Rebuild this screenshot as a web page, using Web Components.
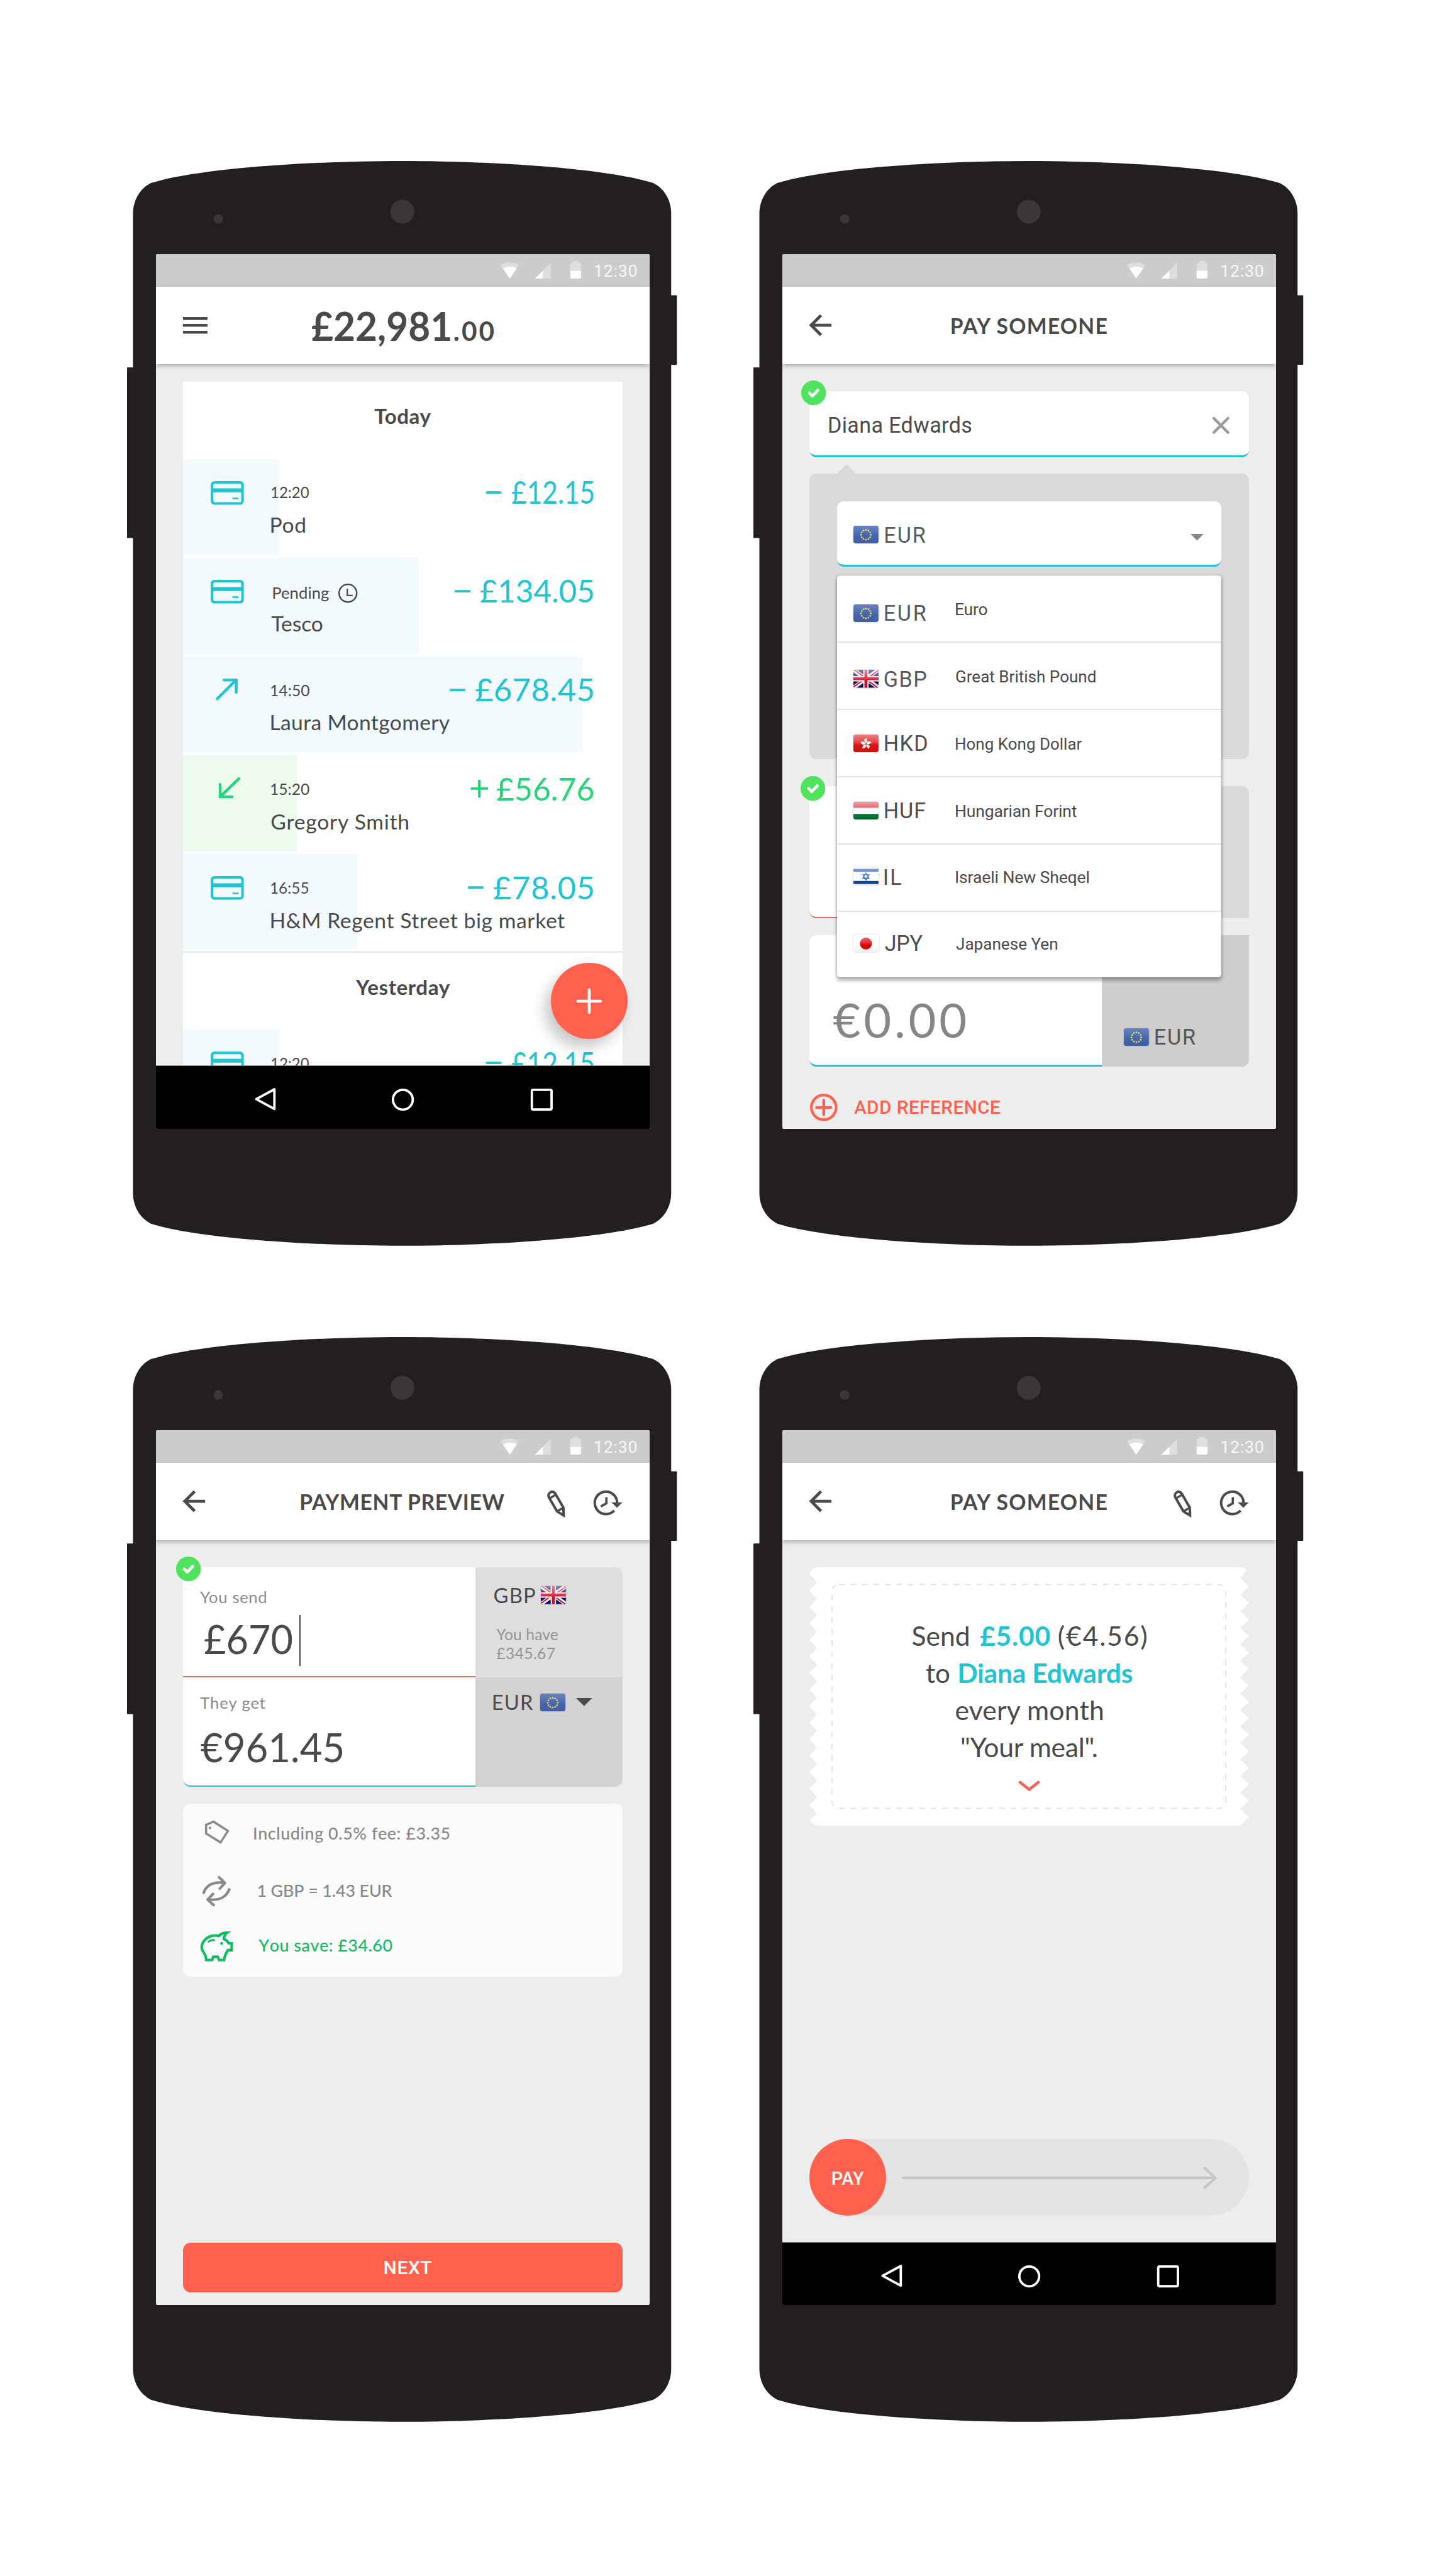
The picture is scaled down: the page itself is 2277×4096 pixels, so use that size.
<!DOCTYPE html>
<html lang="en">
<head>
<meta charset="utf-8">
<title>Money transfer app screens</title>
<style>
html,body{margin:0;padding:0;background:#fff}
body{width:2277px;height:4096px;overflow:hidden}
</style>
</head>
<body>
<device-board>
  <phone-frame>
    <app-bar>
      <ui-icon slot="lead" name="menu"></ui-icon>
      <ui-text up="90" size="67.5" wt="700" w="231.5">£22,981</ui-text>
      <ui-text up="90" size="44.5" wt="700" w="67" ml="7">.00</ui-text>
    </app-bar>
    <tx-feed></tx-feed>
    <nav-bar></nav-bar>
  </phone-frame>
  <phone-frame>
    <app-bar>
      <ui-icon slot="lead" name="back"></ui-icon>
      <ui-text up="79.5" size="35.5" wt="700" w="261.5">PAY SOMEONE</ui-text>
    </app-bar>
    <pay-form></pay-form>
  </phone-frame>
  <phone-frame>
    <app-bar>
      <ui-icon slot="lead" name="back"></ui-icon>
      <ui-text up="79.5" size="35.5" wt="700" w="342">PAYMENT PREVIEW</ui-text>
      <ui-icon slot="actions" name="pencil"></ui-icon>
      <ui-icon slot="actions" name="history"></ui-icon>
    </app-bar>
    <payment-preview></payment-preview>
  </phone-frame>
  <phone-frame>
    <app-bar>
      <ui-icon slot="lead" name="back"></ui-icon>
      <ui-text up="79.5" size="35.5" wt="700" w="261.5">PAY SOMEONE</ui-text>
      <ui-icon slot="actions" name="pencil"></ui-icon>
      <ui-icon slot="actions" name="history"></ui-icon>
    </app-bar>
    <pay-confirm></pay-confirm>
    <nav-bar></nav-bar>
  </phone-frame>
</device-board>

<script>
const TEAL = '#22c4d2', CORAL = '#ff614e', INK = '#4a4a4a';

class Base extends HTMLElement {
  connectedCallback() {
    if (this.shadowRoot) return;
    this.attachShadow({ mode: 'open' });
    this.shadowRoot.innerHTML = this.render();
  }
}
const define = (n, c) => customElements.define(n, c);

/* A single line of type: its baseline is the bottom of the box, its ink spans the width w.
   Short lines are tracked out to w; lines that would need tight tracking are condensed instead. */
const pen = document.createElement('canvas').getContext('2d');
define('ui-text', class extends Base {
  render() {
    const a = n => this.getAttribute(n);
    const roboto = a('f') === 'r';
    const size = +a('size'), wt = a('wt') || 400, w = +a('w');
    const fam = roboto ? 'Roboto, sans-serif' : 'Lato, sans-serif';
    const text = this.textContent;
    const kern = /\d/.test(text) ? 'none' : 'normal';
    pen.font = `${wt} ${size}px ${fam}`;
    pen.fontKerning = kern;
    const m = pen.measureText(text);
    const ink = m.actualBoundingBoxLeft + m.actualBoundingBoxRight;
    let ls = text.length > 1 ? (w - ink) / (text.length - 1) : 0, sx = 1;
    if (ls < -.008 * size) { sx = w / ink; ls = 0; }
    return `<style>
      :host{display:flex;align-items:flex-end;flex:none;height:${a('up')}px;width:${w}px;
        margin-left:${a('ml') || 0}px;color:${a('c') || INK};white-space:nowrap}
      span{display:block;flex:none;font:${wt} ${size}px/1 ${fam};font-kerning:${kern};letter-spacing:${ls.toFixed(3)}px;
        ${sx < 1 ? `transform:scaleX(${sx.toFixed(4)});transform-origin:0 0;` : ''}
        margin-bottom:${roboto ? -.158 : -.125}em;margin-left:${(m.actualBoundingBoxLeft * sx).toFixed(2)}px}
    </style><span><slot></slot></span>`;
  }
});
const T = (text, up, size, w, o = {}) =>
  `<ui-text up="${up}" size="${size}" w="${w}" ${Object.entries(o).map(([k, v]) => `${k}="${v}"`).join(' ')}>${text}</ui-text>`;

const ICONS = {
  menu: [41, 28, '<path d="M0 2.5H41M0 14H41M0 25.5H41" stroke-width="4.8"/>'],
  back: [37, 36, '<path d="M37 18H3M19.5 1.5L3 18L19.5 34.5" stroke-width="5"/>'],
  pencil: [30, 44, '<g transform="translate(8.4 8.4) rotate(60)" stroke-width="4.2"><path d="M0 -6.2A6.2 6.2 0 0 0 0 6.2H27L38.5 0L27 -6.2Z"/><path d="M2 -6V6M27 -6V6" stroke-width="3.4"/></g><path d="M25 36L29.5 43.5L29.5 34Z" fill="currentColor" stroke="none"/>', 8],
  history: [48, 42, '<path d="M34.3 34.7A18.8 18.8 0 1 1 39.4 22" stroke-width="4.2"/><path d="M30 21.2H48L39 30Z" fill="currentColor" stroke="none"/><path d="M21.3 12.3V22.5L12 27.8" stroke-width="3.8"/>', 4],
  card: [56, 40, '<rect x="2.2" y="2.2" width="51.2" height="35.2" rx="4.5" stroke-width="4.4"/><path d="M2 15.4H53.6" stroke-width="6.8"/><path d="M36.5 29H46.5" stroke-width="2.8"/>'],
  out: [38, 37, '<path d="M2.5 34L34 2.5M14 2.4H34.4V23" stroke-width="4.8" stroke-linecap="round" stroke-linejoin="round"/>'],
  in: [38, 37, '<path d="M33.5 2.2L2.2 32.5M2.2 12V32.6H22" stroke-width="4.8" stroke-linecap="round" stroke-linejoin="round"/>'],
  clock: [32, 32, '<circle cx="16" cy="16" r="14.8" stroke-width="2.6"/><path d="M15 8.5V20H24" stroke-width="2.4"/>'],
  close: [28, 28, '<path d="M2 2L26 26M26 2L2 26" stroke-width="4.5" stroke-linecap="round"/>'],
  caret: [28, 14, '<path d="M0 0H28L14 14Z" fill="currentColor" stroke="none"/>'],
  plus: [42, 42, '<path d="M21 2V40M2 21H40" stroke-width="4.8" stroke-linecap="round"/>'],
  add: [46, 46, '<circle cx="23" cy="23" r="20.7" stroke-width="4.4"/><path d="M23 11V35M11 23H35" stroke-width="4.6" stroke-linecap="round"/>'],
  tag: [43, 41, '<path d="M15.3 2.6L2.8 8V22.5L27 37.5L39.5 18.3Z" stroke-width="3.6"/><circle cx="9.5" cy="13.3" r="2.2" fill="currentColor" stroke="none"/>'],
  swap: [47, 51, '<g stroke-width="4.4" stroke-linecap="round" stroke-linejoin="round"><path d="M2 28C7 15 17 9 37 11.5M27.8 2L37.6 11.7L29 21"/><path d="M44.8 22.5C40 35 30 41.5 9 39.5M18.7 48.8L8.6 39.5L17.6 30"/></g>'],
  pig: [56, 51, '<path d="M31 7.8C25 5.5 15 7.5 9 13.5C2 20.5 1.2 28.5 6 35C9 39 10 43 10.5 48H20.5L22.3 42.5H29.8L32 48H40.3C40.6 42 43.5 37 46.8 31.5H53V20H48.5C46.5 16.5 43.5 14 40 12.6C40.5 8 42.5 4.5 45.8 2.2C40 2 35 4 31 7.8Z" stroke-width="4.4"/><path d="M13.2 18.2C16 15.5 20 14 25 14.6" stroke-width="3"/><circle cx="36.3" cy="20.2" r="2.4" fill="currentColor" stroke="none"/>'],
  chevron: [37, 18, '<path d="M1.5 1.8L18.5 15.2L35.5 1.8" stroke-width="4.8"/>']
};
define('ui-icon', class extends Base {
  render() {
    const [w, h, body, mt] = ICONS[this.getAttribute('name')];
    const W = +this.getAttribute('w') || w;
    return `<style>:host{display:block;flex:none;width:${W}px;height:${h * W / w}px;margin-top:${mt || 0}px;color:${this.getAttribute('c') || INK}}
      svg{display:block;width:100%;height:100%;overflow:visible}</style>
      <svg viewBox="0 0 ${w} ${h}" fill="none" stroke="currentColor">${body}</svg>`;
  }
});

const FLAGS = {
  EUR: `<rect width="42" height="30" fill="#4464ad"/>${[...Array(12)].map((_, i) => `<circle cx="${(21 + 8.2 * Math.sin(i * Math.PI / 6)).toFixed(2)}" cy="${(15.2 - 8.2 * Math.cos(i * Math.PI / 6)).toFixed(2)}" r="1.4" fill="#f0e04d"/>`).join('')}`,
  GBP: `<rect width="42" height="30" fill="#0c0c6c"/><path d="M0 0L42 30M42 0L0 30" stroke="#fff" stroke-width="6.5"/><path d="M0 -1L21 14M42 1L21 16M42 31L21 16M0 29L21 14" stroke="#d2102a" stroke-width="2.2"/><path d="M21 0V30M0 15H42" stroke="#fff" stroke-width="9"/><path d="M21 0V30M0 15H42" stroke="#d2102a" stroke-width="5"/>`,
  HKD: `<rect width="42" height="30" fill="#dc1111"/><g fill="#fff" transform="translate(21 15.5)">${[0, 72, 144, 216, 288].map(r => `<path transform="rotate(${r})" d="M0 -1C-4 -3.5 -4 -8 1.5 -9.6C.6 -7.5 4 -5 0 -1Z"/>`).join('')}</g>`,
  HUF: `<rect width="42" height="30" fill="#fff"/><rect width="42" height="10" fill="#e23a44"/><rect y="20.3" width="42" height="9.7" fill="#08743a"/>`,
  IL: `<rect width="42" height="30" fill="#fff"/><rect y="2.6" width="42" height="5" fill="#1c5bb0"/><rect y="23" width="42" height="5" fill="#0a4596"/><path d="M21 9.3L26.2 18.4H15.8ZM21 21.6L26.2 12.4H15.8Z" fill="none" stroke="#1c5bb0" stroke-width="1.3"/>`,
  JPY: `<rect width="42" height="30" fill="#fff"/><circle cx="21" cy="15" r="10" fill="#e00008"/>`
};
define('ui-flag', class extends Base {
  render() {
    const code = this.getAttribute('code');
    return `<style>:host{display:block;flex:none;width:42px;height:30px;border-radius:4px;overflow:hidden;position:relative;box-shadow:0 0 2px rgba(0,0,0,.35)}
      svg{display:block;width:100%;height:100%}
      i{position:absolute;inset:0;border-radius:4px;background:linear-gradient(rgba(255,255,255,${code === 'EUR' ? .2 : .48}),rgba(255,255,255,${code === 'EUR' ? .05 : .2}) 45%,rgba(255,255,255,0) 60%,rgba(0,0,0,.06))}</style>
      <svg viewBox="0 0 42 30">${FLAGS[code]}</svg><i></i>`;
  }
});

define('check-badge', class extends Base {
  render() {
    return `<style>:host{display:block;position:absolute;z-index:3;width:41.4px;height:41.4px}svg{display:block}</style>
      <svg width="41.4" height="41.4" viewBox="0 0 41.4 41.4"><circle cx="20.7" cy="20.7" r="20.7" fill="#50e35d"/>
      <path d="M13.8 21L18.8 26L28 16.2" fill="none" stroke="#fff" stroke-width="5" stroke-linecap="round" stroke-linejoin="round"/></svg>`;
  }
});

define('device-board', class extends Base {
  render() {
    return `<style>:host{zoom:.94875;display:grid;box-sizing:border-box;width:2400px;height:4317px;padding:270px 0 0 223px;
      grid-template-columns:902px 902px;grid-template-rows:1818px 1818px;column-gap:148px;row-gap:153px;background:#fff}</style><slot></slot>`;
  }
});

define('phone-frame', class extends Base {
  render() {
    return `<style>
      :host{display:block;position:relative;width:902px;height:1818px}
      .body{position:absolute;left:-10px;top:0;display:block}
      .screen{position:relative;margin:0 0 0 38px;top:0;width:828px;height:1466.5px;display:flex;flex-direction:column;background:#ededed;border-radius:3px;overflow:hidden}
      .bezel{box-sizing:border-box;padding-top:156px;height:100%}
    </style>
    <svg class="body" width="922" height="1818" viewBox="-10 0 922 1818">
      <g fill="#231f20"><rect x="-10" y="346" width="20" height="286" rx="1"/><rect x="892" y="225" width="19.5" height="116.5" rx="1"/>
      <path d="M0 88C0 68 10 47 30 37C110 12 300 0 451 0C602 0 792 12 872 37C892 47 902 68 902 88V1730C902 1750 892 1771 872 1781C792 1806 602 1818 451 1818C300 1818 110 1806 30 1781C10 1771 0 1750 0 1730Z"/></g>
      <circle cx="451.5" cy="85" r="20" fill="#3b3736"/><circle cx="143" cy="97" r="8" fill="#3b3736"/>
    </svg>
    <div class="bezel"><div class="screen"><status-bar></status-bar><slot></slot></div></div>`;
  }
});

define('status-bar', class extends Base {
  render() {
    return `<style>:host{display:flex;flex:none;box-sizing:border-box;height:55px;padding-right:21.5px;justify-content:flex-end;background:#ccc}
      svg{display:block;flex:none}</style>
      <svg width="158" height="55" viewBox="578 0 158 55" fill="#fff">
        <path opacity=".35" d="M593.5 41L578 18.8C587 12.4 600 12.4 609 18.8Z"/>
        <path opacity=".93" d="M593.5 41L582 24.2C589 19.8 598 19.8 605 24.2Z"/>
        <path opacity=".35" d="M662.3 14.5V41H635.5Z"/><path opacity=".93" d="M649 28V41H635.5Z"/>
        <path opacity=".35" d="M699 11.5H708.5V14.5H710.5Q713 14.5 713 17V28H694.7V17Q694.7 14.5 697.2 14.5H699Z"/>
        <path opacity=".93" d="M694.7 28H713V38.5Q713 41 710.5 41H697.2Q694.7 41 694.7 38.5Z"/>
      </svg>${T('12:30', 38.7, 28, 70.5, { f: 'r', wt: 400, c: '#f7f7f7' })}`;
  }
});

define('app-bar', class extends Base {
  render() {
    return `<style>:host{display:grid;flex:none;grid-template-columns:1fr auto 1fr;box-sizing:border-box;height:129px;padding:0 46px;background:#fff;
      box-shadow:0 3px 7px rgba(0,0,0,.26);position:relative;z-index:4}
      .lead{display:flex;align-items:center}.title{display:flex}.actions{display:flex;align-items:center;justify-content:flex-end;gap:48px}</style>
      <div class="lead"><slot name="lead"></slot></div><div class="title"><slot></slot></div><div class="actions"><slot name="actions"></slot></div>`;
  }
});

define('nav-bar', class extends Base {
  render() {
    return `<style>:host{display:block;flex:none;height:105px;background:#000;box-shadow:0 -1px 0 #777;position:relative;z-index:4}svg{display:block}</style>
      <svg width="828" height="105" viewBox="0 0 828 105" fill="none" stroke="#fff" stroke-width="4" stroke-linejoin="round">
      <path d="M198.5 39L168 55.5L198.5 72Z"/><circle cx="413.8" cy="56.5" r="16.6"/><rect x="630" y="40" width="33" height="33" rx="2"/></svg>`;
  }
});

/* Screen 1: transactions */
define('tx-row', class extends Base {
  render() {
    const a = n => this.getAttribute(n);
    const c = a('sign') === '+' ? '#27d47c' : TEAL, bg = a('sign') === '+' ? '#edfbee' : '#f2fafd';
    const pad = { card: 46, out: 54.4, in: 59.5 }[a('icon')];
    return `<style>:host{display:grid;flex:none;grid-template-columns:147.6px 1fr auto;grid-template-rows:76px 48.6px;box-sizing:border-box;height:165.6px;padding-right:48.6px;
      background:linear-gradient(${bg},${bg}) no-repeat 0 0/${a('bar')}px 160.8px}
      .ico{padding:37px 0 0 ${pad}px}.meta{display:flex}.amt{display:flex;gap:15.5px}
      .clock{margin:43.5px 0 0 15.4px}.name{grid-column:2/-1}
      .p{margin-left:3px;display:flex}</style>
      <div class="ico"><ui-icon name="${a('icon')}" c="${c}"></ui-icon></div>
      <div class="meta">${a('time') ? T(a('time'), 66.7, 27, a('tw')) : `<div class="p">${T('Pending', 69.4, 27, 94)}</div><div class="clock"><ui-icon name="clock"></ui-icon></div>`}</div>
      <div class="amt">${T(a('sign') === '+' ? '+' : '−', 76, 60, 28, { c })}${T(a('amount'), 76, 53.5, a('aw'), { c })}</div>
      <div class="name">${T(a('name').replace('&', '&amp;'), 48.6, 35.5, a('nw'))}</div>`;
  }
});
define('tx-feed', class extends Base {
  render() {
    const row = (icon, time, tw, name, nw, sign, amount, aw, bar) =>
      `<tx-row icon="${icon}" time="${time}" tw="${tw}" name="${name}" nw="${nw}" sign="${sign}" amount="${amount}" aw="${aw}" bar="${bar}"></tx-row>`;
    return `<style>:host{display:block;position:relative;height:1177px;flex:none;box-sizing:border-box;padding:30px 46px 0;overflow:hidden}
      .card{background:#fff;display:flex;flex-direction:column}
      .day{display:flex;justify-content:center;height:129px;flex:none}
      hr{margin:-3px 0 0;border:0;height:2.5px;background:#ebebeb;flex:none}
      .fab{position:absolute;left:662.5px;top:1003.5px;width:128px;height:128px;border-radius:50%;background:${CORAL};display:flex;align-items:center;justify-content:center;box-shadow:-10px 14px 24px rgba(0,0,0,.22)}</style>
      <div class="card"><div class="day">${T('Today', 71, 35, 95, { wt: 700 })}</div>
      ${row('card', '12:20', 62.5, 'Pod', 57, '-', '£12.15', 137, 161)}
      ${row('card', '', 0, 'Tesco', 86, '-', '£134.05', 189, 395.5)}
      ${row('out', '14:50', 64.5, 'Laura Montgomery', 300, '-', '£678.45', 197.5, 670)}
      ${row('in', '15:20', 64, 'Gregory Smith', 230, '+', '£56.76', 162, 191)}
      ${row('card', '16:55', 62.5, 'H&amp;M Regent Street big market', 492.5, '-', '£78.05', 167, 292)}
      <hr><div class="day">${T('Yesterday', 71, 35, 159, { wt: 700 })}</div>
      ${row('card', '12:20', 62.5, 'Pod', 57, '-', '£12.15', 137, 161)}</div>
      <div class="fab"><ui-icon name="plus" c="#fff"></ui-icon></div>`;
  }
});

/* Screen 2: currency selection */
define('currency-menu', class extends Base {
  render() {
    const rows = [
      ['EUR', 69.5, 'Euro', 52.7, 48.5, 76.4, 67.4], ['GBP', 70, 'Great British Pound', 234, 47, 74.7, 68],
      ['HKD', 71, 'Hong Kong Dollar', 212, 42.2, 70, 67.8], ['HUF', 68, 'Hungarian Forint', 203, 42.6, 70.2, 68],
      ['IL', 28, 'Israeli New Sheqel', 223, 40, 68.5, 66], ['JPY', 64, 'Japanese Yen', 170, 39.6, 67.3, 65.6]];
    return `<style>:host{display:block;background:#fff;border-radius:5px;box-shadow:0 5px 7px rgba(0,0,0,.32),0 0 4px rgba(0,0,0,.28)}
      .row{display:grid;grid-template-columns:52.7px 119.3px 1fr;align-items:start;height:111.4px;padding-left:27px;box-sizing:border-box}
      .row+.row{border-top:2.4px solid #e1e1e1;height:112.6px}</style>
      ${rows.map(([c, cw, n, nw, fy, cy, ny], i) => `<div class="row"><ui-flag code="${c}" style="margin-top:${fy - (i ? 1.4 : 0)}px"></ui-flag>
      ${T(c, cy - (i ? 1.4 : 0), 36, cw, { f: 'r', c: i < 2 ? '#595959' : '#4e4e4e' })}${T(n, ny - (i ? 1.4 : 0), 28, nw, { f: 'r' })}</div>`).join('')}`;
  }
});
define('pay-form', class extends Base {
  render() {
    return `<style>
      :host{display:flex;flex:1;flex-direction:column;box-sizing:border-box;padding:46px 46px 0;position:relative}
      .field{display:flex;box-sizing:border-box;height:110px;background:#fff;border-radius:12px;border-bottom:3.5px solid ${TEAL}}
      .to{padding:0 33px 0 32px;justify-content:space-between;flex:none}
      .panel{position:relative;z-index:2;flex:none;box-sizing:border-box;margin-top:28px;height:478px;padding:46px;background:#d9d9d9;border-radius:12px}
      .panel::before{content:"";position:absolute;left:46px;top:-16px;border:solid transparent;border-width:0 16.3px 16.5px;border-bottom-color:#d9d9d9}
      .sel{padding:0 30px 0 27.6px}.sel ui-flag{margin-top:41px}.sel .car{margin:55px 0 0 auto}
      currency-menu{position:absolute;left:46px;right:46px;top:170px}
      .pair{display:flex;flex:none;position:relative}
      .l{width:490px;box-sizing:border-box;background:#fff;border-radius:12px 0 0 12px}.r{flex:1;display:flex}
      .p1{margin-top:46px;height:221px}.p1 .l{border-bottom:3px solid #ee6a5c}.p1 .r{background:#d9d9d9;border-radius:0 12px 0 0}
      .p2{margin-top:28px;height:220.5px}.p2 .l{border-bottom:3.5px solid ${TEAL};padding-left:39px}
      .p2 .r{background:#cecece;border-radius:0 0 12px 0;padding-left:36.6px}.p2 .r ui-flag{margin:156px 10.4px 0 0}
      .add{display:flex;padding:0 0 0 1px}
      check-badge.a{left:32.3px;top:27.3px}check-badge.b{left:-15.7px;top:-17.7px}
    </style>
    <check-badge class="a"></check-badge>
    <div class="field to">${T('Diana Edwards', 69, 36, 239, { f: 'r' })}<ui-icon name="close" c="#999" style="margin-top:42.7px"></ui-icon></div>
    <div class="panel"><div class="field sel"><ui-flag code="EUR"></ui-flag>${T('EUR', 69, 36, 68, { f: 'r', c: '#595959', ml: 10.6 })}<div class="car"><ui-icon name="caret" w="22" c="#868686"></ui-icon></div></div>
    <currency-menu></currency-menu></div>
    <div class="pair p1"><check-badge class="b"></check-badge><div class="l"></div><div class="r"></div></div>
    <div class="pair p2"><div class="l">${T('€0.00', 172, 80, 222, { c: '#868686' })}</div><div class="r"><ui-flag code="EUR"></ui-flag>${T('EUR', 183.7, 36, 67.5, { f: 'r', c: '#565656' })}</div></div>
    <div class="add"><ui-icon name="add" c="${CORAL}" style="margin-top:46px"></ui-icon>${T('ADD REFERENCE', 80.2, 31, 244.6, { f: 'r', wt: 500, c: CORAL, ml: 27.6 })}</div>`;
  }
});

/* Screen 3: payment preview */
define('payment-preview', class extends Base {
  render() {
    const info = (icon, h, iy, ix, gap, text, up, w, c) => `<div class="info" style="height:${h}px"><div style="padding:${iy}px 0 0 ${ix}px;width:${gap - ix}px"><ui-icon name="${icon}" c="${c}"></ui-icon></div>${T(text, up, 28.3, w, { c, wt: 500 })}</div>`;
    return `<style>
      :host{display:flex;flex:1;flex-direction:column;box-sizing:border-box;padding:46px 46px 21.5px;position:relative}
      check-badge{left:34.6px;top:27.3px}
      .pair{display:flex;flex:none;height:184px}
      .l{width:490px;box-sizing:border-box;background:#fff;padding-left:28.5px}.r{flex:1;padding-left:31px}
      .a .l{border-radius:12px 0 0 0;border-bottom:3px solid #dd6a5e}.a .r{background:#dedede;border-radius:0 13px 0 0}
      .b .l{border-radius:0 0 0 13px;border-bottom:3px solid #35bccb}.b .r{background:#d2d2d2;border-radius:0 0 13px 0}
      .val{display:flex}.cur{width:2.8px;height:86px;background:${INK};margin:19.6px 0 0 12px}
      .code{display:flex}
      .card{flex:none;box-sizing:border-box;margin-top:28px;height:290px;background:#fbfbfb;border-radius:13px}
      .info{display:flex}
      .next{margin-top:auto;height:83px;flex:none;background:${CORAL};border-radius:13px;display:flex;justify-content:center}
    </style><check-badge></check-badge>
    <div class="pair a"><div class="l">${T('You send', 59.9, 27, 111, { c: '#8a8a8a' })}<div class="val" style="margin-left:6.5px">${T('£670', 85.4, 67.5, 147.5)}<div class="cur"></div></div></div>
      <div class="r"><div class="code">${T('GBP', 60.3, 34.5, 69)}<ui-flag code="GBP" style="margin:31.4px 0 0 9.7px"></ui-flag></div>
      <div style="margin-left:4px">${T('You have', 61.1, 26, 103, { c: '#949494' })}${T('£345.67', 32, 26, 98.7, { c: '#949494' })}</div></div></div>
    <div class="pair b"><div class="l">${T('They get', 53.5, 27, 109.6, { c: '#8a8a8a' })}<div style="margin-left:1px">${T('€961.45', 89.3, 67.5, 237.6)}</div></div>
      <div class="r" style="padding-left:30px"><div class="code">${T('EUR', 55.6, 34.5, 66.6)}<ui-flag code="EUR" style="margin:27.4px 18.5px 0 11.5px"></ui-flag><div style="padding-top:34.5px"><ui-icon name="caret" w="27"></ui-icon></div></div></div></div>
    <div class="card">
      ${info('tag', 121, 27.7, 35.4, 118.7, 'Including 0.5% fee: £3.35', 60.7, 328, '#888')}
      ${info('swap', 93, .7, 32, 125.5, '1 GBP = 1.43 EUR', 35.7, 225, '#888')}
      ${info('pig', 70, 0, 28, 125.5, 'You save: £34.60', 34.5, 225, '#10bd5f')}
    </div>
    <div class="next">${T('NEXT', 52.7, 31.5, 79, { f: 'r', wt: 500, c: '#fff', ml: 18 })}</div>`;
  }
});

/* Screen 4: confirmation ticket */
define('pay-ticket', class extends Base {
  render() {
    let d = 'M12 0H723Q731 0 733 6';
    for (let i = 0; i < 15; i++) { const y = 18.7 + i * 27.6; d += `L722 ${y.toFixed(1)}L736.5 ${(y + 13.6).toFixed(1)}`; }
    d += 'L722 433H13Q3 430 1 423';
    for (let i = 14; i >= 0; i--) { const y = 25 + i * 27.7; d += `L13 ${y.toFixed(1)}L0 ${(y - 13.8).toFixed(1)}`; }
    d += 'Q3 2 12 0Z';
    return `<style>:host{display:block;position:relative;width:736px;height:433px;flex:none}
      svg{position:absolute;left:0;top:0;display:block}
      .copy{position:relative;display:flex;flex-direction:column;align-items:center;padding-top:69.5px}
      .line{display:flex}.chev{padding-top:38.5px}</style>
      <svg width="737" height="433" viewBox="0 0 737 433"><path d="${d}" fill="#fff"/>
      <rect x="37.8" y="29" width="660" height="375" rx="12" fill="none" stroke="#e4e4e4" stroke-width="2" stroke-dasharray="9.5 9.7"/></svg>
      <div class="copy">
      <div class="line">${T('Send', 62.3, 45, 95)}${T('£5.00', 62.3, 45, 117, { wt: 700, c: TEAL, ml: 18.6 })}${T('(€4.56)', 62.3, 45, 146.5, { ml: 15.4 })}</div>
      <div class="line">${T('to', 62.3, 45, 39.5)}${T('Diana Edwards', 62.3, 45, 290.7, { wt: 700, c: TEAL, ml: 16 })}</div>
      ${T('every month', 62.3, 45, 247)}${T('"Your meal".', 62.3, 45, 227)}
      <div class="chev"><ui-icon name="chevron" c="#f0675a"></ui-icon></div></div>`;
  }
});
define('pay-confirm', class extends Base {
  render() {
    return `<style>:host{display:flex;flex:1;flex-direction:column;justify-content:space-between;box-sizing:border-box;padding:46px 46px 45px}
      .slide{display:flex;height:128.6px;border-radius:65px;background:#e4e4e4}
      .knob{width:128.6px;height:128.6px;border-radius:50%;background:${CORAL};display:flex;justify-content:center;flex:none}
      svg{display:block;margin:45.3px 0 0 25px}</style>
      <pay-ticket></pay-ticket>
      <div class="slide"><div class="knob">${T('PAY', 77.6, 30.5, 53, { f: 'r', wt: 500, c: '#fff', ml: 1 })}</div>
      <svg width="530" height="40" viewBox="0 0 530 40" fill="none" stroke="#c5c5c5" stroke-width="4.4" stroke-linecap="round" stroke-linejoin="round"><path d="M3 20H526M508.5 3.5L526.5 20L508.5 36.5"/></svg></div>`;
  }
});
</script>
</body>
</html>
